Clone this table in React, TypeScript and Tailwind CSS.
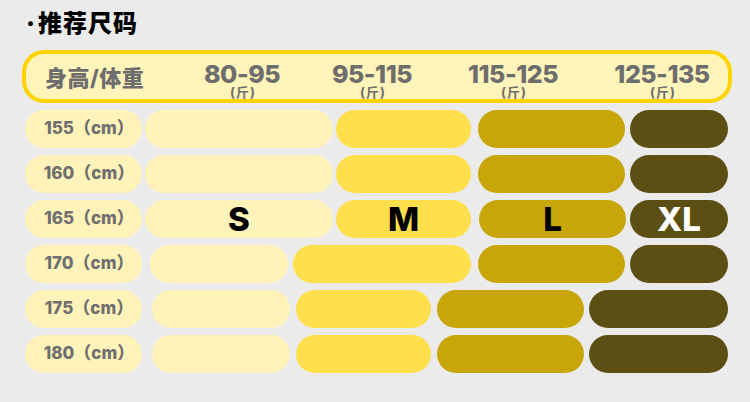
import React from "react";

const cjk = { fontFamily: 'Inter, "Noto Sans CJK SC", sans-serif' };

type Cell = { cls: string; letter?: string; dark?: boolean };

const S = "bg-[#fff3b9]";
const M = "bg-[#ffdf4b]";
const L = "bg-[#c8a609]";
const XL = "bg-[#5c4f14]";

const rows: { label: string; cells: Cell[] }[] = [
  {
    label: "155",
    cells: [
      { cls: `ml-[3px] w-[188px] ${S}` },
      { cls: `ml-[3px] w-[135px] ${M}` },
      { cls: `ml-[7px] w-[147px] ${L}` },
      { cls: `ml-[5px] w-[98px] ${XL}` },
    ],
  },
  {
    label: "160",
    cells: [
      { cls: `ml-[3px] w-[188px] ${S}` },
      { cls: `ml-[3px] w-[135px] ${M}` },
      { cls: `ml-[7px] w-[147px] ${L}` },
      { cls: `ml-[5px] w-[98px] ${XL}` },
    ],
  },
  {
    label: "165",
    cells: [
      { cls: `ml-[3px] w-[188px] ${S}`, letter: "S" },
      { cls: `ml-[3px] w-[135px] ${M}`, letter: "M" },
      { cls: `ml-[8px] w-[147px] ${L}`, letter: "L" },
      { cls: `ml-[4px] w-[98px] ${XL}`, letter: "XL", dark: true },
    ],
  },
  {
    label: "170",
    cells: [
      { cls: `ml-[8px] w-[138px] ${S}` },
      { cls: `ml-[5px] w-[178px] ${M}` },
      { cls: `ml-[7px] w-[147px] ${L}` },
      { cls: `ml-[5px] w-[98px] ${XL}` },
    ],
  },
  {
    label: "175",
    cells: [
      { cls: `ml-[10px] w-[138px] ${S}` },
      { cls: `ml-[6px] w-[135px] ${M}` },
      { cls: `ml-[6px] w-[147px] ${L}` },
      { cls: `ml-[5px] w-[139px] ${XL}` },
    ],
  },
  {
    label: "180",
    cells: [
      { cls: `ml-[10px] w-[138px] ${S}` },
      { cls: `ml-[6px] w-[135px] ${M}` },
      { cls: `ml-[6px] w-[147px] ${L}` },
      { cls: `ml-[5px] w-[139px] ${XL}` },
    ],
  },
];

const cols = [
  { t: "80-95", cls: "ml-[29px]" },
  { t: "95-115", cls: "ml-0" },
  { t: "115-125", cls: "ml-[11px]" },
  { t: "125-135", cls: "ml-[19px]" },
];

export default function App() {
  return (
    <div className="w-[750px] h-[402px] bg-[#ebebeb] overflow-hidden" style={cjk}>
      <div className="pl-[26px] pt-[9px] h-[50px] text-[24px] leading-[30px] font-black text-black">
        ·<span className="ml-[3px] tracking-[1px]">推荐尺码</span>
      </div>
      <div className="ml-[22px] w-[710px] h-[53px] rounded-[22px] border-[4px] border-[#ffd300] bg-[#fff4b9] flex items-center">
        <div className="w-[122px] pl-[19px] text-[22px] font-extrabold text-[#6d6d6d] leading-none pt-[2px] tracking-[0.5px] whitespace-nowrap">
          身高/体重
        </div>
        {cols.map((c) => (
          <div key={c.t} className={`${c.cls} w-[130px] h-full flex flex-col items-center pt-[10px]`}>
            <div className="text-[25px] font-extrabold text-[#6d6d6d] leading-[20px] tracking-[-0.5px]">
              {c.t}
            </div>
            <div className="text-[13px] font-bold text-[#6d6d6d] leading-[14px] mt-[1px] ml-[2px] tracking-[1px]">(斤)</div>
          </div>
        ))}
      </div>
      <div className="mt-[7px] flex flex-col gap-[7px]">
        {rows.map((r) => (
          <div key={r.label} className="flex h-[38px] pl-[25px]">
            <div className="w-[117px] h-full rounded-full bg-[#fff3b9] flex items-center justify-center text-[17px] font-extrabold text-[#6f6f6f] pl-[11px] whitespace-nowrap">
              {r.label}（cm）
            </div>
            {r.cells.map((c, i) => (
              <div
                key={i}
                className={`${c.cls} h-full rounded-full flex items-center justify-center pt-[2px] text-[33px] font-extrabold ${
                  c.dark ? "text-white" : "text-black"
                }`}
              >
                {c.letter}
              </div>
            ))}
          </div>
        ))}
      </div>
    </div>
  );
}
